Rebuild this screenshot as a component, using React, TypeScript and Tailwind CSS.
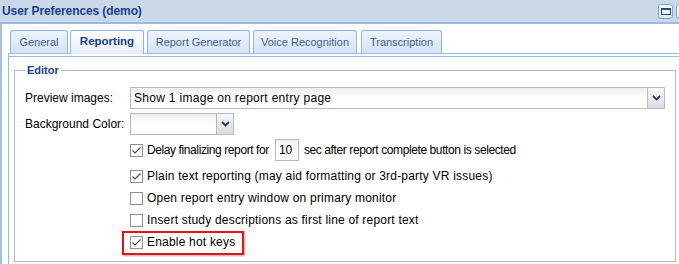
import React from "react";

function CheckBox({ checked }: { checked: boolean }) {
  return (
    <span className="w-[13px] h-[13px] border border-[#8e8f8f] bg-white flex items-center justify-center shrink-0">
      {checked && (
        <svg width="11" height="11" viewBox="0 0 11 11">
          <polyline points="1.5,5.5 4,8 9.5,2.5" fill="none" stroke="#4a4a4a" strokeWidth="1.2" />
        </svg>
      )}
    </span>
  );
}

function Chevron() {
  return (
    <svg width="9" height="6" viewBox="0 0 9 6">
      <polyline points="1,1 4.5,4.5 8,1" fill="none" stroke="#1e3e72" strokeWidth="1.8" />
    </svg>
  );
}

function Combo({ width, value }: { width: string; value?: string }) {
  return (
    <div className={`${width} h-[22px] border border-[#b5b8c8] flex bg-white`}>
      <div className="flex-1 flex items-center pl-[3px] bg-gradient-to-b from-[#eeeeee] via-white to-white text-black whitespace-nowrap overflow-hidden tracking-[0.3px]">
        {value}
      </div>
      <div className="w-[17px] border-l border-[#b5b8c8] bg-gradient-to-b from-[#f7f7f7] to-[#dcdcdc] flex items-center justify-center">
        <Chevron />
      </div>
    </div>
  );
}

function CheckRow({ checked, children }: { checked: boolean; children: React.ReactNode }) {
  return (
    <div className="h-[22px] flex items-center gap-[4px] ml-[105px] whitespace-nowrap">
      <CheckBox checked={checked} />
      <span className="tracking-[0.2px]">{children}</span>
    </div>
  );
}

const tabs = [
  { label: "General", w: "w-[58px]", ml: "ml-0" },
  { label: "Reporting", w: "w-[74px]", ml: "ml-[2px]", active: true },
  { label: "Report Generator", w: "w-[103px]", ml: "ml-[3px]" },
  { label: "Voice Recognition", w: "w-[104px]", ml: "ml-[3px]" },
  { label: "Transcription", w: "w-[81px]", ml: "ml-[4px]" },
];

export default function App() {
  return (
    <div className="w-[679px] h-[264px] overflow-hidden bg-white font-['Liberation_Sans',Arial,sans-serif] text-[12px] text-black">
      <div className="w-[700px] h-[22px] bg-[#cbd8e8] flex items-center pl-[2px] pr-[2px]">
        <span className="font-bold text-[#15428b] text-[12px] tracking-[-0.1px]">User Preferences (demo)</span>
        <div className="ml-auto flex items-center gap-[3px]">
          <span className="w-[15px] h-[15px] rounded-[3px] border border-[#7ea3d6] bg-gradient-to-b from-white to-[#dbe7f6] flex items-center justify-center">
            <span className="w-[10px] h-[7px] border border-t-2 border-[#1f4a8c]" />
          </span>
          <span className="w-[15px] h-[15px] rounded-[3px] border border-[#7ea3d6] bg-gradient-to-b from-white to-[#dbe7f6] flex items-center justify-center">
            <svg width="9" height="11" viewBox="0 0 9 11">
              <polyline points="1.5,4 4.5,1 7.5,4" fill="none" stroke="#1f4a8c" strokeWidth="1.5" />
              <polyline points="1.5,7 4.5,10 7.5,7" fill="none" stroke="#1f4a8c" strokeWidth="1.5" />
            </svg>
          </span>
        </div>
        <span className="w-[7px]" />
      </div>
      <div className="h-[2px] bg-[#99bbe8] w-[700px]" />
      <div className="border-l-2 border-[#a3c2ea] pl-[6px] h-[240px]">
        <div className="flex items-end pt-[6px] pl-[2px] border-b border-[#99bbe8] h-[30px] w-[700px]">
          {tabs.map((t) => (
            <div
              key={t.label}
              className={`${t.w} ${t.ml} rounded-t-[3px] border border-b-0 border-[#8db2e3] flex items-center justify-center whitespace-nowrap ${
                t.active
                  ? "h-[24px] -mb-px relative bg-gradient-to-b from-white to-[#e6eef9] font-bold text-[#15428b] text-[11.5px] pb-[1px]"
                  : "h-[23px] bg-gradient-to-b from-[#eef4fc] to-[#d5e3f5] text-[#3f5f8f] text-[11px]"
              }`}
            >
              {t.label}
            </div>
          ))}
        </div>
        <div className="h-[2px] border-l border-[#99bbe8]" />
        <div className="border-l border-t border-[#99bbe8] pl-[5px] pt-[6px] w-[700px] h-[210px]">
          <fieldset className="w-[662px] border border-[#b5b8c8] pl-[10px] pb-[8px]">
            <legend className="px-[2px] font-bold text-[#15428b] text-[11px] leading-[14px]">Editor</legend>
            <div className="mt-[10px] flex flex-col">
              <div className="h-[22px] flex items-center">
                <span className="w-[105px]">Preview images:</span>
                <Combo width="w-[535px]" value="Show 1 image on report entry page" />
              </div>
              <div className="h-[22px] mt-[4px] flex items-center">
                <span className="w-[105px]">Background Color:</span>
                <Combo width="w-[104px]" />
              </div>
              <div className="h-[22px] mt-[4px] flex items-center ml-[105px] whitespace-nowrap">
                <CheckBox checked />
                <span className="ml-[4px] tracking-[-0.4px]">Delay finalizing report for</span>
                <span className="ml-[6px] w-[24px] h-[22px] border border-[#b5b8c8] bg-gradient-to-b from-[#eeeeee] via-white to-white flex items-center pl-[3px]">
                  10
                </span>
                <span className="ml-[5px] tracking-[-0.4px]">sec after report complete button is selected</span>
              </div>
              <div className="mt-[4px]">
                <CheckRow checked>Plain text reporting (may aid formatting or 3rd-party VR issues)</CheckRow>
                <CheckRow checked={false}>Open report entry window on primary monitor</CheckRow>
                <CheckRow checked={false}>Insert study descriptions as first line of report text</CheckRow>
                <div className="relative">
                  <CheckRow checked>Enable hot keys</CheckRow>
                  <span className="absolute left-[97px] top-0 w-[122px] h-[24px] border-2 border-[#e5141b] shadow-[1px_1px_2px_rgba(0,0,0,0.35)]" />
                </div>
              </div>
            </div>
          </fieldset>
        </div>
      </div>
    </div>
  );
}
